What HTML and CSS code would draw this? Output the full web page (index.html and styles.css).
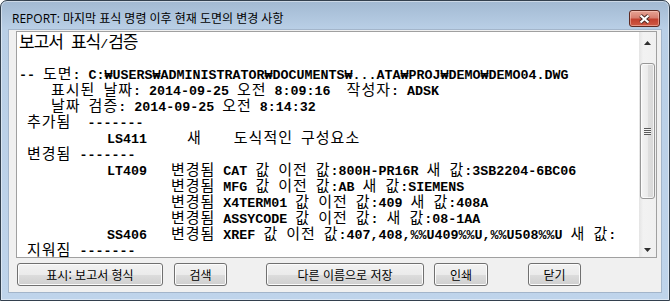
FILE: index.html
```html
<!DOCTYPE html>
<html lang="ko">
<head>
  <meta charset="UTF-8">
  <title>REPORT</title>
  <link rel="stylesheet" href="styles.css">
</head>
<body>
  <div class="window">
    <div class="titlebar">
      <span class="title">REPORT: 마지막 표식 명령 이후 현재 도면의 변경 사항</span>
      <button class="close">
        <svg width="13" height="10" viewBox="0 0 13 10">
          <path d="M2.5 1.5 L10.5 8.5 M10.5 1.5 L2.5 8.5" stroke="#4b2a24" stroke-width="4" fill="none"/>
          <path d="M2.5 1.5 L10.5 8.5 M10.5 1.5 L2.5 8.5" stroke="#fff" stroke-width="2.2" fill="none"/>
        </svg>
      </button>
    </div>

    <div class="client">
      <div class="report">
        <div class="report-text">
<div class="ln head"><span class="k">보고서</span> <span class="k">표식</span>/<span class="k">검증</span></div>
<div class="ln"></div>
<div class="ln">-- <span class="k">도면</span>: C:₩USERS₩ADMINISTRATOR₩DOCUMENTS₩...ATA₩PROJ₩DEMO₩DEMO04.DWG</div>
<div class="ln">    <span class="k">표시된</span> <span class="k">날짜</span>: 2014-09-25 <span class="k">오전</span> 8:09:16  <span class="k">작성자</span>: ADSK</div>
<div class="ln">    <span class="k">날짜</span> <span class="k">검증</span>: 2014-09-25 <span class="k">오전</span> 8:14:32</div>
<div class="ln"> <span class="k">추가됨</span>  -------</div>
<div class="ln">           LS411     <span class="k">새</span>    <span class="k">도식적인</span> <span class="k">구성요소</span></div>
<div class="ln"> <span class="k">변경됨</span> -------</div>
<div class="ln">           LT409   <span class="k">변경됨</span> CAT <span class="k">값</span> <span class="k">이전</span> <span class="k">값</span>:800H-PR16R <span class="k">새</span> <span class="k">값</span>:3SB2204-6BC06</div>
<div class="ln">                   <span class="k">변경됨</span> MFG <span class="k">값</span> <span class="k">이전</span> <span class="k">값</span>:AB <span class="k">새</span> <span class="k">값</span>:SIEMENS</div>
<div class="ln">                   <span class="k">변경됨</span> X4TERM01 <span class="k">값</span> <span class="k">이전</span> <span class="k">값</span>:409 <span class="k">새</span> <span class="k">값</span>:408A</div>
<div class="ln">                   <span class="k">변경됨</span> ASSYCODE <span class="k">값</span> <span class="k">이전</span> <span class="k">값</span>: <span class="k">새</span> <span class="k">값</span>:08-1AA</div>
<div class="ln">           SS406   <span class="k">변경됨</span> XREF <span class="k">값</span> <span class="k">이전</span> <span class="k">값</span>:407,408,%%U409%%U,%%U508%%U <span class="k">새</span> <span class="k">값</span>:</div>
<div class="ln"> <span class="k">지워짐</span> -------</div>
        </div>
        <div class="vscroll">
          <div class="arrow up"></div>
          <div class="track">
            <div class="thumb"><span class="grip"></span></div>
          </div>
          <div class="arrow down"></div>
        </div>
      </div>

      <div class="buttons">
        <button class="btn btn-format">표시: 보고서 형식</button>
        <button class="btn btn-search">검색</button>
        <button class="btn btn-saveas">다른 이름으로 저장</button>
        <button class="btn btn-print">인쇄</button>
        <button class="btn btn-close">닫기</button>
      </div>
    </div>
  </div>
</body>
</html>
```

FILE: styles.css
```css
body {
  margin: 0;
  background: #fff;
}
.window {
  width: 670px;
  height: 301px;
  box-sizing: border-box;
  border: 1px solid #33404e;
  border-radius: 7px 7px 0 0;
  background: linear-gradient(#a2b9d2, #b9cfe6 28px, #bfd4eb);
  box-shadow: inset 0 0 0 1px rgba(255, 255, 255, 0.45);
  display: flex;
  flex-direction: column;
  overflow: hidden;
}
.titlebar {
  height: 28px;
  box-sizing: border-box;
  padding: 9px 9px 0 11px;
  display: flex;
  align-items: flex-start;
}
.title {
  font-family: "Open Sans", "Noto Sans CJK KR", sans-serif;
  font-size: 12px;
  line-height: 17px;
  color: #000;
}
.close {
  margin-left: auto;
  width: 31px;
  height: 17px;
  padding: 0;
  border: 1px solid #5e2a22;
  border-radius: 3px;
  background: linear-gradient(#e6a394, #d77f70 45%, #c2412f 55%, #cf5a45);
  box-shadow: inset 0 0 0 1px rgba(255, 210, 200, 0.5);
  display: flex;
  align-items: center;
  justify-content: center;
}
.close svg {
  display: block;
}

.client {
  flex: 1;
  margin: 0 7px 7px 7px;
  border: 1px solid #a3b5ca;
  background: #f0f0f0;
  display: flex;
  flex-direction: column;
}
.report {
  height: 227px;
  box-sizing: border-box;
  margin: 1px 4px 0 7px;
  border: 1px solid #a0a0a0;
  background: #fff;
  display: flex;
}
.report-text {
  flex: 1;
  overflow: hidden;
  padding-left: 2px;
  font-family: "Liberation Mono", "DejaVu Sans Mono", monospace;
  font-weight: bold;
  font-size: 13.33px;
  color: #000;
}
.ln {
  height: 16px;
  line-height: 16px;
  white-space: pre;
}
.k {
  font-family: "Noto Sans CJK KR", sans-serif;
  font-weight: 400;
  font-size: 15px;
  letter-spacing: 1px;
}
.head {
  height: 17px;
  line-height: 17px;
  font-weight: normal;
}
.head .k {
  font-size: 17px;
  letter-spacing: -1px;
}

.vscroll {
  width: 17px;
  display: flex;
  flex-direction: column;
  background: linear-gradient(to right, #e4e4e4, #f2f2f2 25%, #f0f0f0);
}
.arrow {
  height: 17px;
  display: flex;
  justify-content: center;
}
.arrow::before {
  content: "";
  width: 7px;
  height: 4px;
  background: #2f2f2f;
}
.up::before {
  margin-top: 9px;
  clip-path: polygon(50% 0, 100% 100%, 0 100%);
}
.down::before {
  margin-top: 8px;
  clip-path: polygon(0 0, 100% 0, 50% 100%);
}
.track {
  flex: 1;
}
.thumb {
  height: 136px;
  box-sizing: border-box;
  margin: 14px 1px 0 1px;
  border: 1px solid #979797;
  border-radius: 3px;
  background: linear-gradient(to right, #f4f4f4, #ebebeb 50%, #dedede 51%, #d8d8d8);
  box-shadow: inset 0 0 0 1px rgba(255, 255, 255, 0.7);
  display: flex;
  align-items: center;
  justify-content: center;
}
.grip {
  width: 7px;
  height: 7px;
  background: repeating-linear-gradient(#5a5a5a 0 1px, #f4f4f4 1px 2px);
}

.buttons {
  display: flex;
  margin-top: 5px;
}
.btn {
  height: 23px;
  padding: 0;
  border: 1px solid #707070;
  border-radius: 3px;
  background: linear-gradient(#f2f2f2, #ebebeb 50%, #dddddd 51%, #cfcfcf);
  box-shadow: inset 0 0 0 1px #fcfcfc;
  font-family: "Noto Sans CJK KR", sans-serif;
  font-size: 12px;
  color: #000;
}
.btn-format { width: 146px; margin-left: 8px; }
.btn-search { width: 53px; margin-left: 11px; }
.btn-saveas { width: 158px; margin-left: 39px; }
.btn-print { width: 54px; margin-left: 10px; }
.btn-close { width: 53px; margin-left: 40px; }
```
